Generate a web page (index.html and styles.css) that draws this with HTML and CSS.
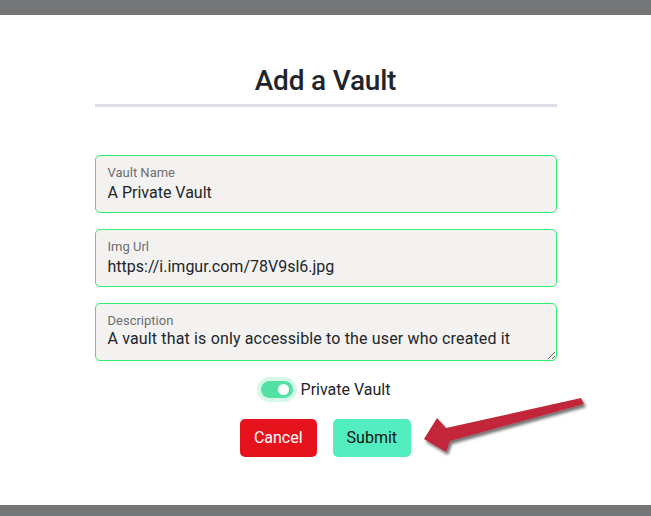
FILE: index.html
```html
<!DOCTYPE html>
<html lang="en">
<head>
<meta charset="utf-8">
<title>Add a Vault</title>
<link rel="stylesheet" href="styles.css">
</head>
<body>
<div class="page">
  <div class="backdrop-bar top"></div>
  <main class="modal">
    <h3 class="modal-title">Add a Vault</h3>
    <form class="vault-form">
      <div class="floating">
        <input class="control" id="name" type="text" value="A Private Vault">
        <label for="name">Vault Name</label>
      </div>
      <div class="floating">
        <input class="control" id="img" type="text" value="https://i.imgur.com/78V9sl6.jpg">
        <label for="img">Img Url</label>
      </div>
      <div class="floating">
        <textarea class="control area" id="desc">A vault that is only accessible to the user who created it</textarea>
        <label for="desc">Description</label>
      </div>
      <div class="switch-row">
        <span class="switch"><span class="knob"></span></span>
        <span class="switch-label">Private Vault</span>
      </div>
      <div class="actions">
        <button type="button" class="btn btn-cancel">Cancel</button>
        <button type="button" class="btn btn-submit">Submit</button>
      </div>
    </form>
  </main>
  <div class="backdrop-bar bottom"></div>
  <svg class="arrow" width="180" height="75" viewBox="0 0 180 75">
    <defs>
      <filter id="sh" x="-20%" y="-40%" width="140%" height="180%">
        <feDropShadow dx="2" dy="3" stdDeviation="1.8" flood-color="#000" flood-opacity="0.55"/>
      </filter>
    </defs>
    <polygon points="9,49 22,28 31,38 166,8 169,14 35,51 31,62" fill="#c1283b" filter="url(#sh)"/>
  </svg>
</div>
</body>
</html>
```
FILE: styles.css
```css
* { box-sizing: border-box; }
html, body { margin: 0; padding: 0; }
body {
  font-family: Roboto, "Liberation Sans", Arial, sans-serif;
  color: #212529;
  background: #ffffff;
}
.page {
  position: relative;
  width: 651px;
  height: 516px;
  display: flex;
  flex-direction: column;
  overflow: hidden;
}
.backdrop-bar { background: #747577; }
.backdrop-bar.top { height: 15px; }
.backdrop-bar.bottom { height: 11px; }
.modal {
  flex: 1;
  background: #ffffff;
  padding-top: 49px;
  display: flex;
  flex-direction: column;
  align-items: center;
}
.modal-title {
  width: 462px;
  margin: 0;
  font-size: 28px;
  font-weight: 500;
  line-height: 34px;
  text-align: center;
  padding-bottom: 6px;
  border-bottom: 3px solid #dcdfe3;
  letter-spacing: -0.2px;
}
.vault-form {
  width: 462px;
  margin-top: 48px;
  display: flex;
  flex-direction: column;
}
.floating {
  position: relative;
  margin-bottom: 16px;
}
.control {
  display: block;
  width: 100%;
  height: 58px;
  margin: 0;
  border: 1px solid #2fef6c;
  border-radius: 5px;
  background: #f4f2f1;
  font-family: Roboto, "Liberation Sans", Arial, sans-serif;
  font-size: 16px;
  color: #212529;
  padding: 25px 12px 8px;
  outline: none;
}
.control.area {
  line-height: 20px;
  resize: vertical;
  overflow: hidden;
  padding: 25px 12px 8px;
  letter-spacing: 0.15px;
}
.floating label {
  position: absolute;
  top: 10px;
  left: 13px;
  font-size: 13px;
  line-height: 16px;
  color: #6d6e70;
  pointer-events: none;
}
.switch-row {
  display: flex;
  align-items: center;
  justify-content: center;
  gap: 8px;
  height: 24px;
  margin-bottom: 18px;
}
.switch {
  position: relative;
  width: 32px;
  height: 17px;
  border-radius: 9px;
  background: #52e0a3;
  box-shadow: 0 0 0 4px #d5f8ea;
}
.knob {
  position: absolute;
  top: 3px;
  right: 4px;
  width: 11px;
  height: 11px;
  border-radius: 50%;
  background: #ffffff;
}
.switch-label {
  font-size: 16px;
  line-height: 24px;
  position: relative;
  top: 1px;
}
.actions {
  display: flex;
  justify-content: center;
  gap: 16px;
}
.btn {
  font-family: Roboto, "Liberation Sans", Arial, sans-serif;
  font-size: 16px;
  line-height: 24px;
  padding: 6px 13px;
  border: 1px solid transparent;
  border-radius: 5px;
  cursor: pointer;
}
.btn-cancel {
  background: #e6131c;
  color: #ffffff;
}
.btn-submit {
  background: #52eec0;
  color: #111111;
}
.arrow {
  position: absolute;
  left: 415px;
  top: 390px;
}
```
